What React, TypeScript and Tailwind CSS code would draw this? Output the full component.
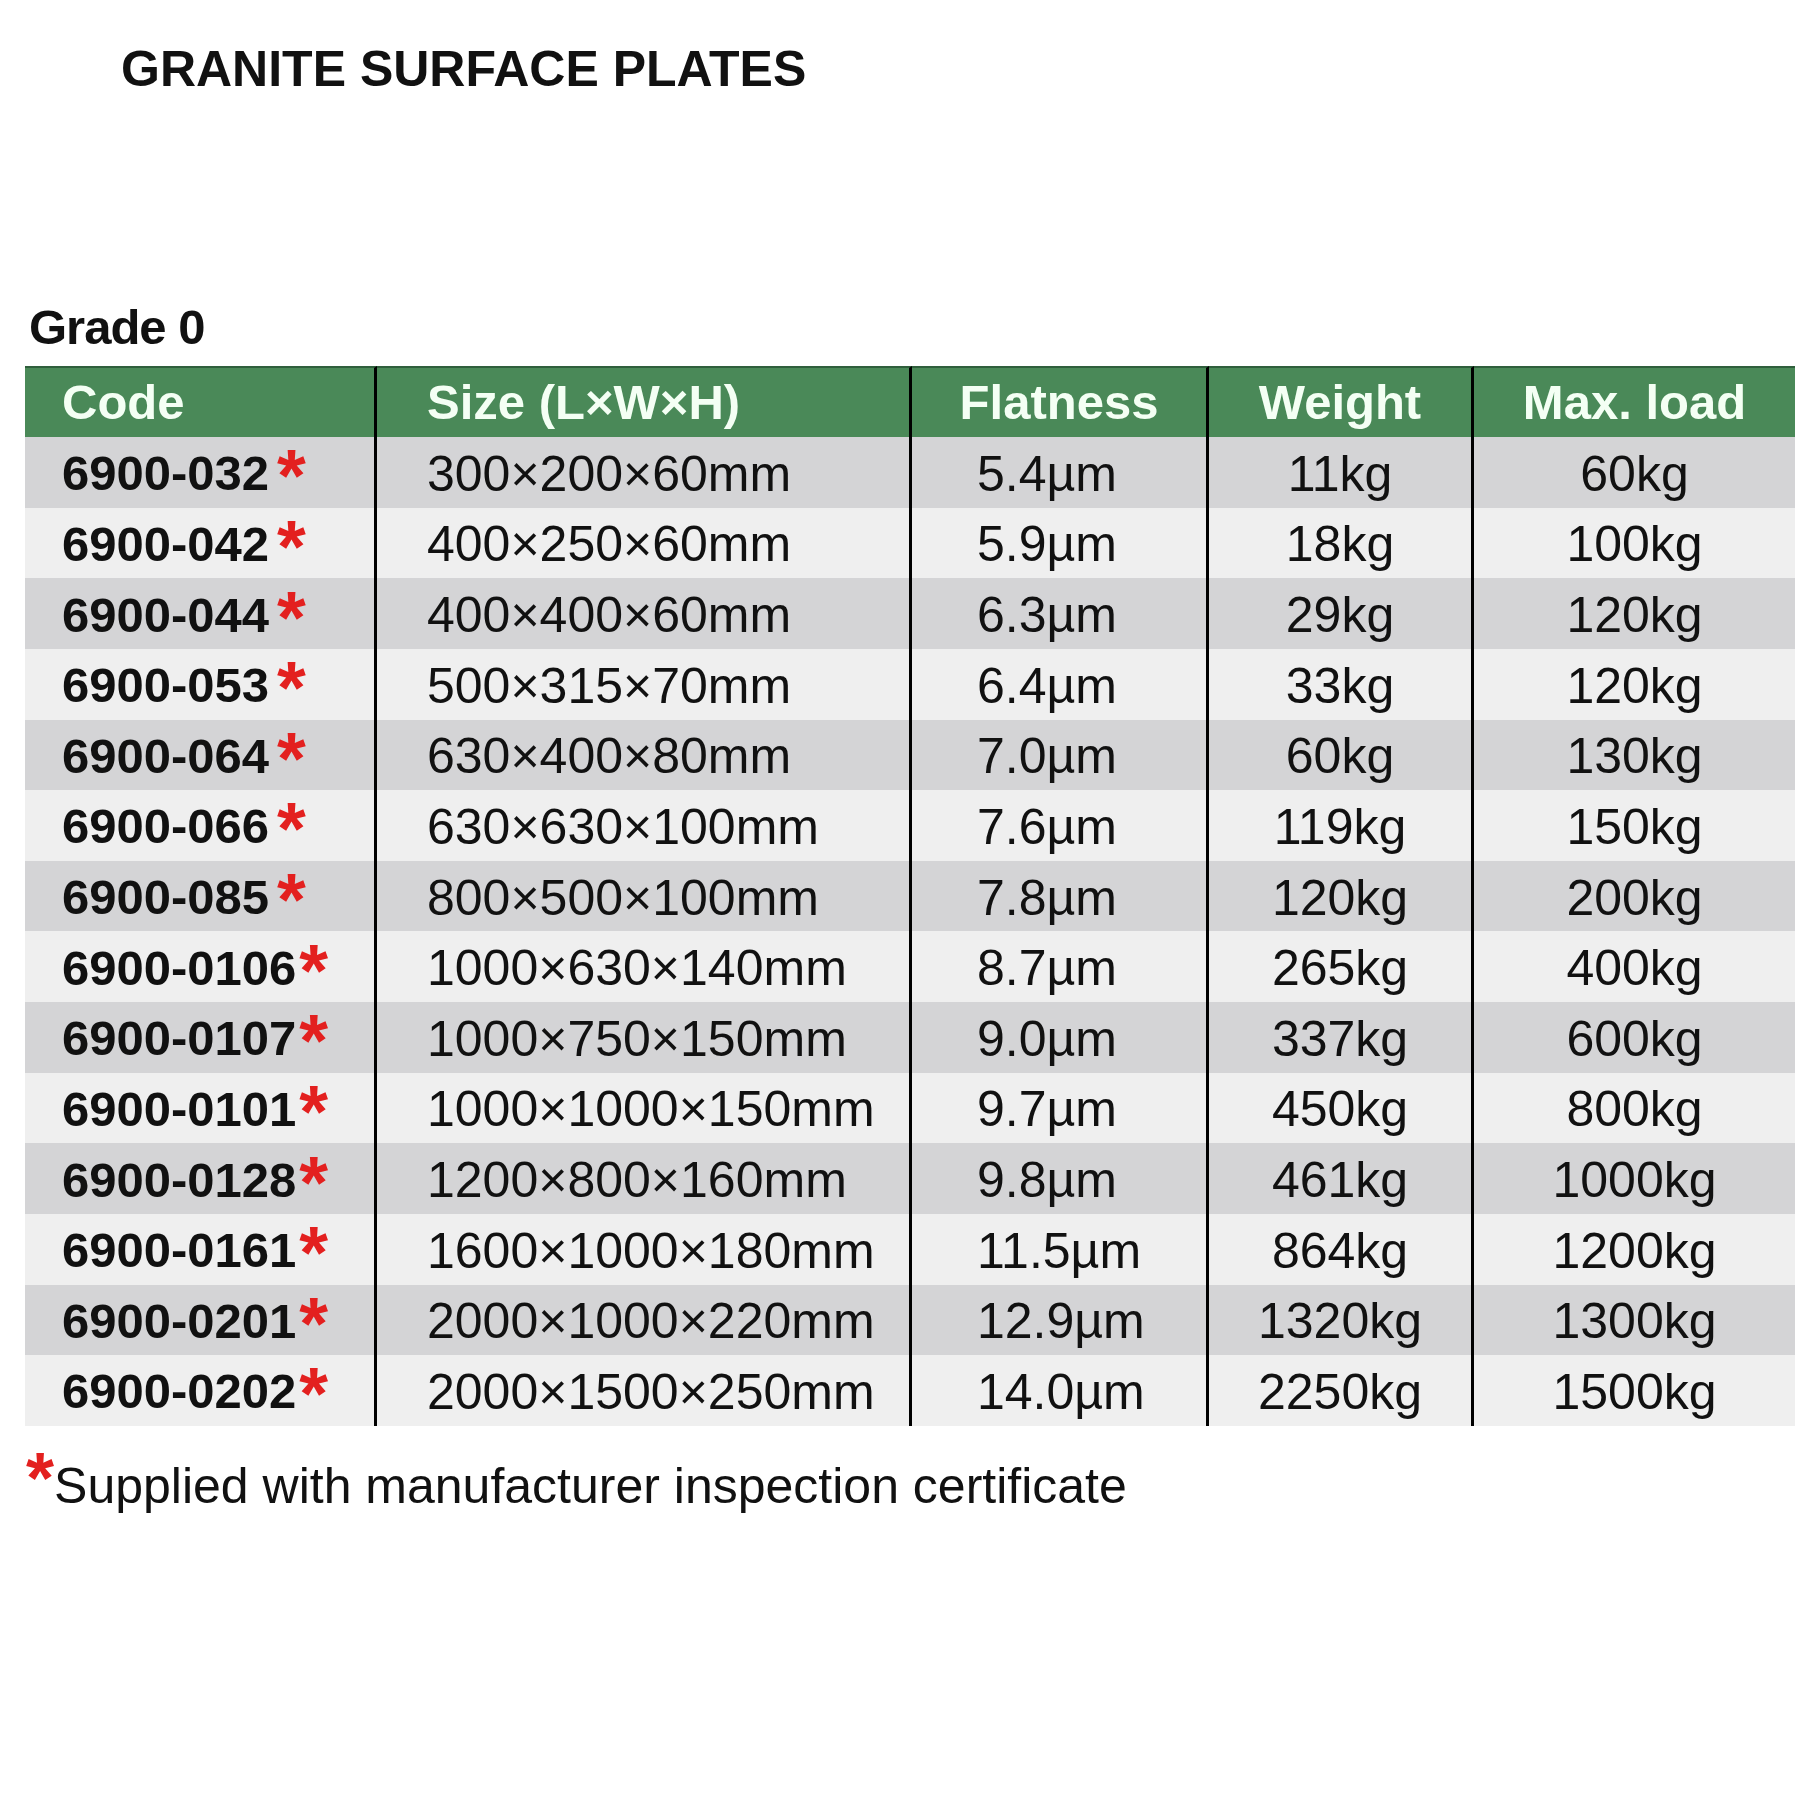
import React from 'react';

interface PlateRow {
  code: string;
  size: string;
  flatness: string;
  weight: string;
  maxLoad: string;
}

const plates: PlateRow[] = [
  { code: '6900-032', size: '300×200×60mm', flatness: '5.4µm', weight: '11kg', maxLoad: '60kg' },
  { code: '6900-042', size: '400×250×60mm', flatness: '5.9µm', weight: '18kg', maxLoad: '100kg' },
  { code: '6900-044', size: '400×400×60mm', flatness: '6.3µm', weight: '29kg', maxLoad: '120kg' },
  { code: '6900-053', size: '500×315×70mm', flatness: '6.4µm', weight: '33kg', maxLoad: '120kg' },
  { code: '6900-064', size: '630×400×80mm', flatness: '7.0µm', weight: '60kg', maxLoad: '130kg' },
  { code: '6900-066', size: '630×630×100mm', flatness: '7.6µm', weight: '119kg', maxLoad: '150kg' },
  { code: '6900-085', size: '800×500×100mm', flatness: '7.8µm', weight: '120kg', maxLoad: '200kg' },
  { code: '6900-0106', size: '1000×630×140mm', flatness: '8.7µm', weight: '265kg', maxLoad: '400kg' },
  { code: '6900-0107', size: '1000×750×150mm', flatness: '9.0µm', weight: '337kg', maxLoad: '600kg' },
  { code: '6900-0101', size: '1000×1000×150mm', flatness: '9.7µm', weight: '450kg', maxLoad: '800kg' },
  { code: '6900-0128', size: '1200×800×160mm', flatness: '9.8µm', weight: '461kg', maxLoad: '1000kg' },
  { code: '6900-0161', size: '1600×1000×180mm', flatness: '11.5µm', weight: '864kg', maxLoad: '1200kg' },
  { code: '6900-0201', size: '2000×1000×220mm', flatness: '12.9µm', weight: '1320kg', maxLoad: '1300kg' },
  { code: '6900-0202', size: '2000×1500×250mm', flatness: '14.0µm', weight: '2250kg', maxLoad: '1500kg' },
];

const App: React.FC = () => {
  return (
    <div className="w-[1819px] h-[1819px] bg-white text-[#111] font-['Liberation_Sans',Arial,sans-serif]">
      <h1 className="pt-[44px] pl-[121px] text-[50px] leading-none font-bold">GRANITE SURFACE PLATES</h1>

      <h2 className="mt-[209px] pl-[29px] text-[49px] leading-none font-bold tracking-[-1px]">Grade 0</h2>

      {/* Table */}
      <div className="mt-[14px] ml-[25px] w-[1770px] grid grid-cols-[352px_535px_297px_265px_321px]">
        {/* Header */}
        <div className="h-[71px] bg-[#4a8958] border-t-2 border-[#2f5f3c] border-r-[3px] border-r-black pl-[37px] flex items-center text-[49px] leading-none font-bold text-[#f4fff4]">
          Code
        </div>
        <div className="h-[71px] bg-[#4a8958] border-t-2 border-[#2f5f3c] border-r-[3px] border-r-black pl-[50px] flex items-center text-[49px] leading-none font-bold text-[#f4fff4]">
          Size (L×W×H)
        </div>
        <div className="h-[71px] bg-[#4a8958] border-t-2 border-[#2f5f3c] border-r-[3px] border-r-black flex items-center justify-center text-[49px] leading-none font-bold text-[#f4fff4]">
          Flatness
        </div>
        <div className="h-[71px] bg-[#4a8958] border-t-2 border-[#2f5f3c] border-r-[3px] border-r-black flex items-center justify-center text-[49px] leading-none font-bold text-[#f4fff4]">
          Weight
        </div>
        <div className="h-[71px] bg-[#4a8958] border-t-2 border-[#2f5f3c] flex items-center justify-center text-[49px] leading-none font-bold text-[#f4fff4]">
          Max. load
        </div>

        {/* Rows */}
        {plates.map((p, i) => {
          const bg = i % 2 === 0 ? 'bg-[#d4d4d6]' : 'bg-[#efefef]';
          const shortCode = p.code.length === 8;
          return (
            <React.Fragment key={p.code}>
              <div className={`${bg} h-[70.64px] border-r-[3px] border-black pl-[37px] pt-[3px] flex items-center`}>
                <span className="text-[49px] leading-none font-bold whitespace-nowrap">
                  {p.code}
                  <span
                    className={`${shortCode ? 'ml-[8px]' : 'ml-[3px]'} text-[74px] leading-[0] text-[#e3201f] align-[-11px]`}
                  >
                    *
                  </span>
                </span>
              </div>
              <div className={`${bg} h-[70.64px] border-r-[3px] border-black pl-[50px] pt-[3px] flex items-center text-[50px] leading-none`}>
                {p.size}
              </div>
              <div className={`${bg} h-[70.64px] border-r-[3px] border-black pl-[65px] pt-[3px] flex items-center text-[50px] leading-none`}>
                {p.flatness}
              </div>
              <div className={`${bg} h-[70.64px] border-r-[3px] border-black pt-[3px] flex items-center justify-center text-[50px] leading-none`}>
                {p.weight}
              </div>
              <div className={`${bg} h-[70.64px] pt-[3px] flex items-center justify-center text-[50px] leading-none`}>
                {p.maxLoad}
              </div>
            </React.Fragment>
          );
        })}
      </div>

      {/* Footnote */}
      <div className="mt-[16px] pl-[26px] flex items-baseline">
        <span className="text-[72px] leading-none font-bold text-[#e3201f]">*</span>
        <span className="text-[50px] leading-none">Supplied with manufacturer inspection certificate</span>
      </div>
    </div>
  );
};

export default App;
